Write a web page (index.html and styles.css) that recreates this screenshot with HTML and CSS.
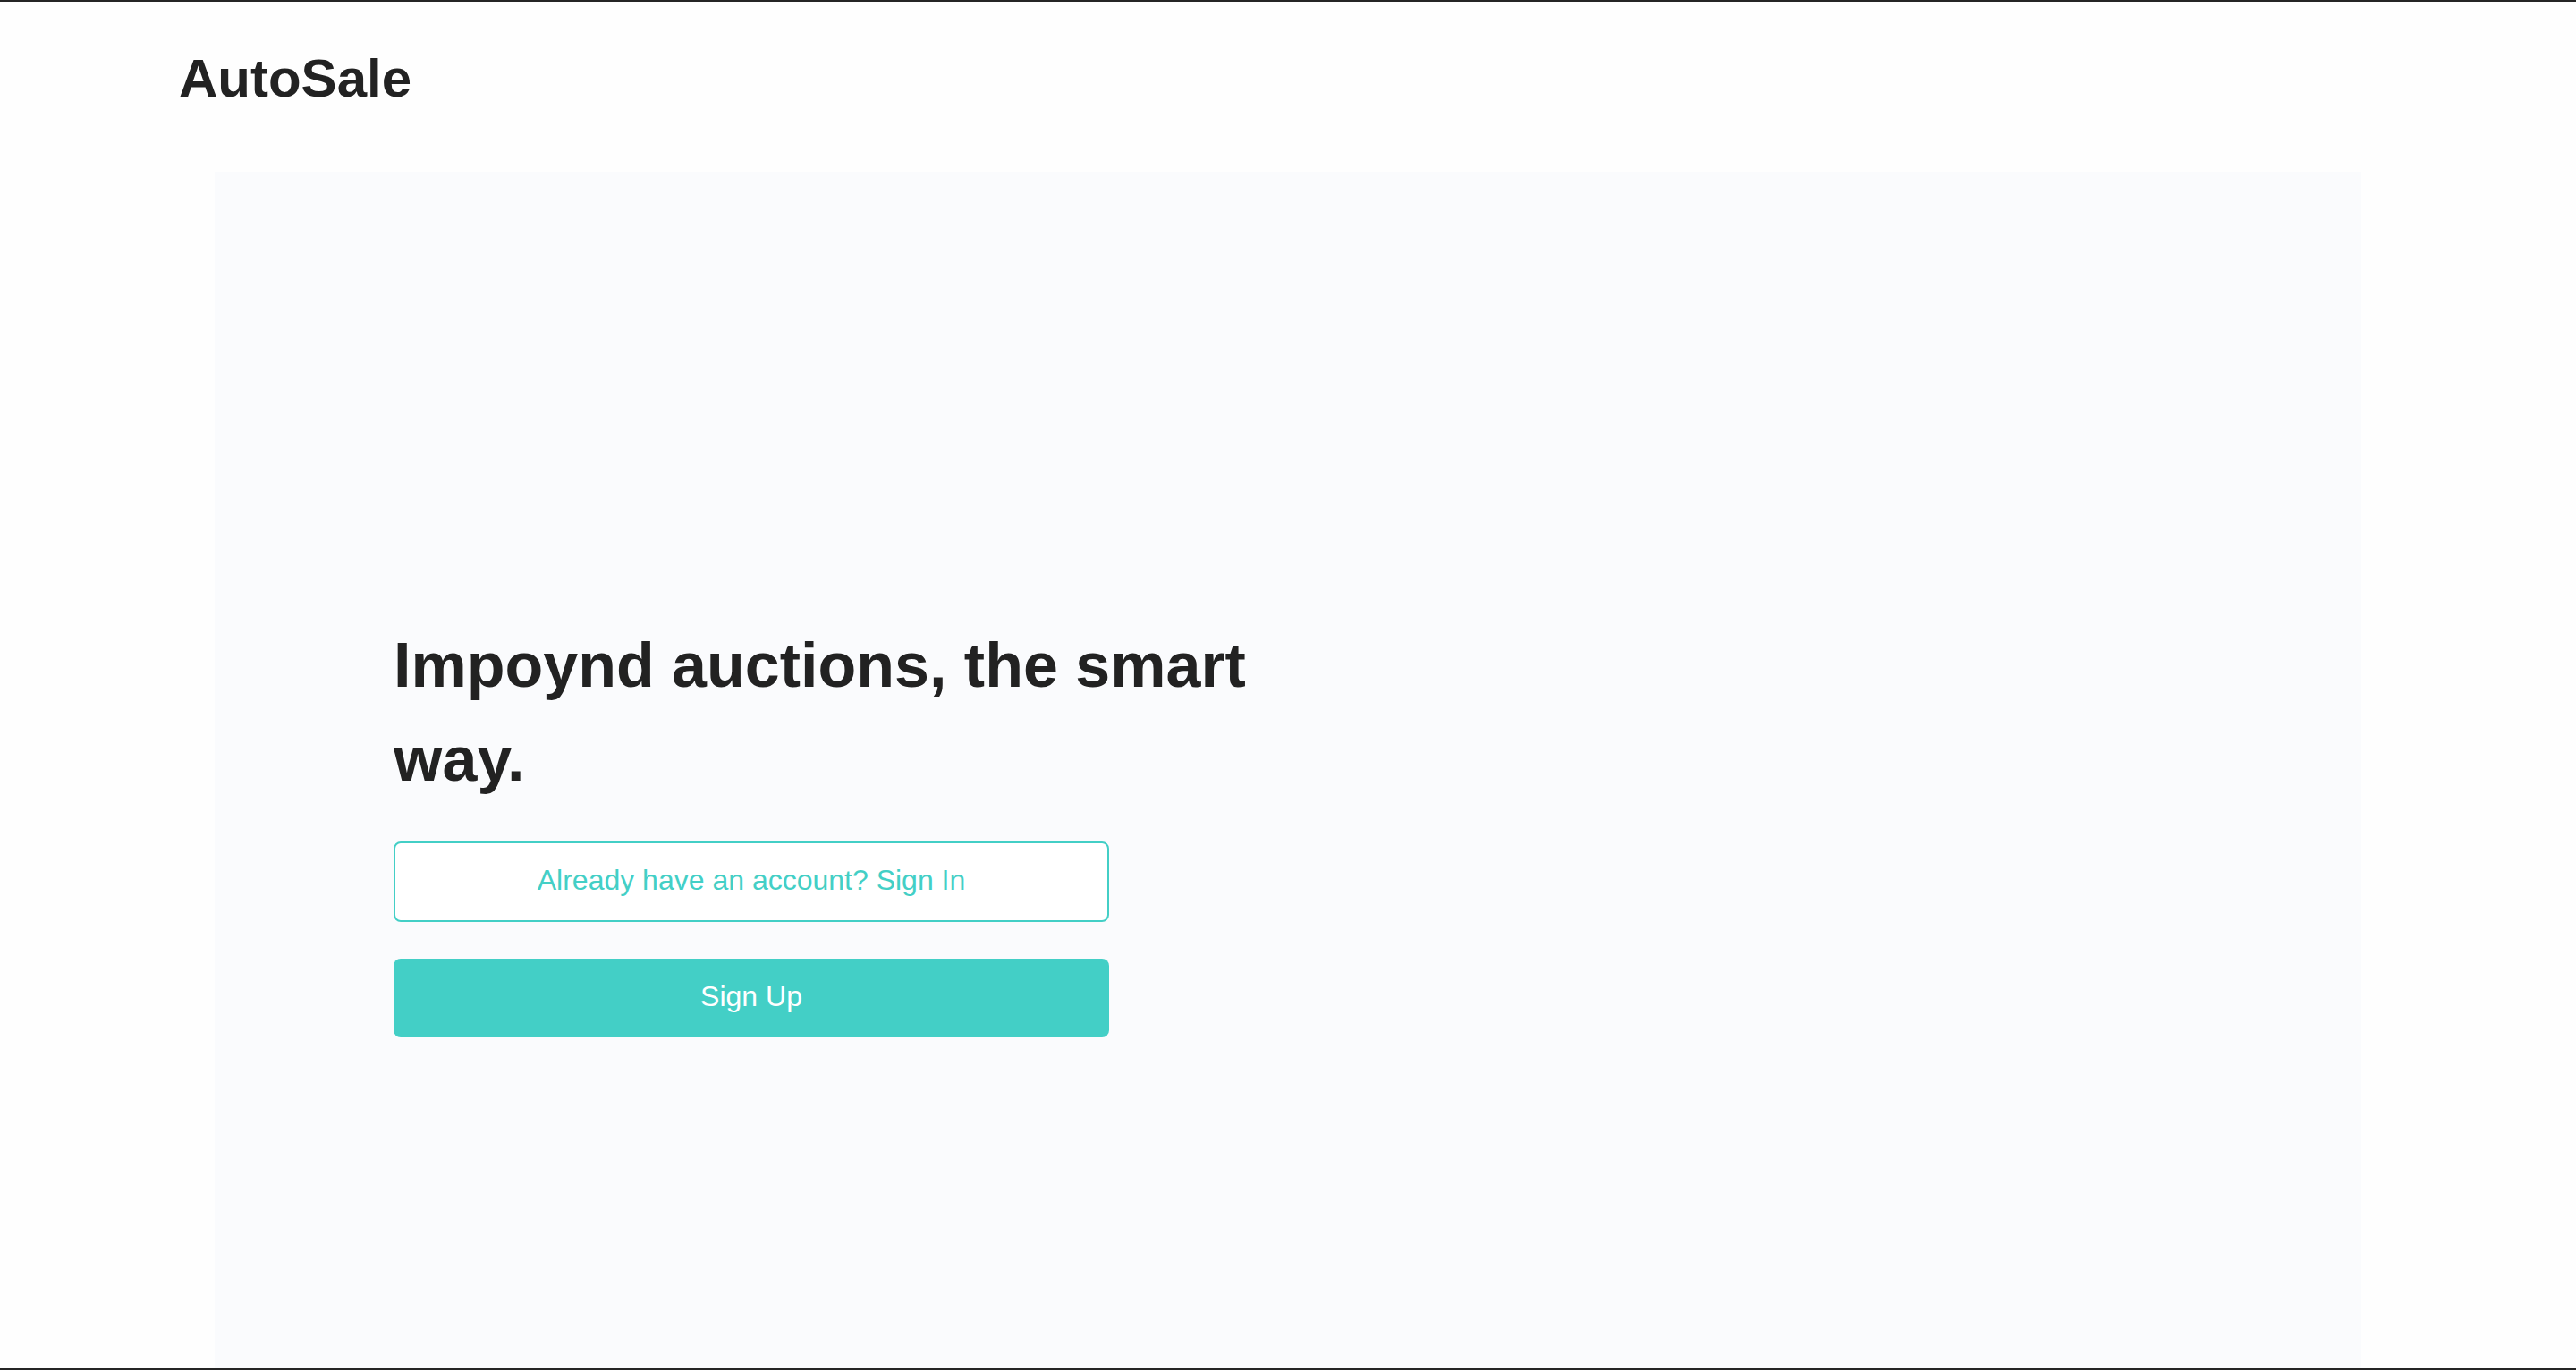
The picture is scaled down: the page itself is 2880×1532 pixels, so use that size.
FILE: index.html
```html
<!DOCTYPE html>
<html lang="en">
<head>
<meta charset="utf-8">
<title>AutoSale</title>
<link rel="stylesheet" href="styles.css">
</head>
<body>
<div class="page">
  <header class="header">
    <div class="logo">AutoSale</div>
  </header>
  <main class="panel">
    <section class="hero">
      <h1 class="hero-title">Impoynd auctions, the smart way.</h1>
      <div class="actions">
        <button class="btn btn-outline" type="button">Already have an account? Sign In</button>
        <button class="btn btn-fill" type="button">Sign Up</button>
      </div>
    </section>
  </main>
</div>
</body>
</html>
```

FILE: styles.css
```css
* { box-sizing: border-box; }

html, body {
  margin: 0;
  padding: 0;
  background: #fefefe;
}

body {
  font-family: "Liberation Sans", Arial, sans-serif;
  color: #222222;
}

.page {
  height: 1532px;
  border-top: 2px solid #252525;
  border-bottom: 2px solid #252525;
  display: flex;
  flex-direction: column;
  overflow: hidden;
}

.header {
  height: 190px;
  padding: 56px 0 0 200px;
  flex: none;
}

.logo {
  font-size: 60px;
  line-height: 60px;
  font-weight: 700;
  color: #222222;
}

.panel {
  flex: 1;
  margin: 0 240px;
  background: #fafbfd;
  padding: 500px 0 0 200px;
}

.hero {
  width: 1000px;
}

.hero-title {
  margin: 0;
  font-size: 70px;
  line-height: 105px;
  font-weight: 700;
  color: #222222;
}

.actions {
  margin-top: 39px;
  width: 800px;
  display: flex;
  flex-direction: column;
  gap: 41px;
}

.btn {
  font-family: "Liberation Sans", Arial, sans-serif;
  font-size: 32px;
  width: 800px;
  border-radius: 8px;
  cursor: pointer;
  padding: 0 0 3px 0;
}

.btn-outline {
  height: 90px;
  background: #ffffff;
  border: 2px solid #43cfc6;
  color: #43cfc6;
}

.btn-fill {
  height: 88px;
  background: #43cfc6;
  border: none;
  color: #ffffff;
}
```
